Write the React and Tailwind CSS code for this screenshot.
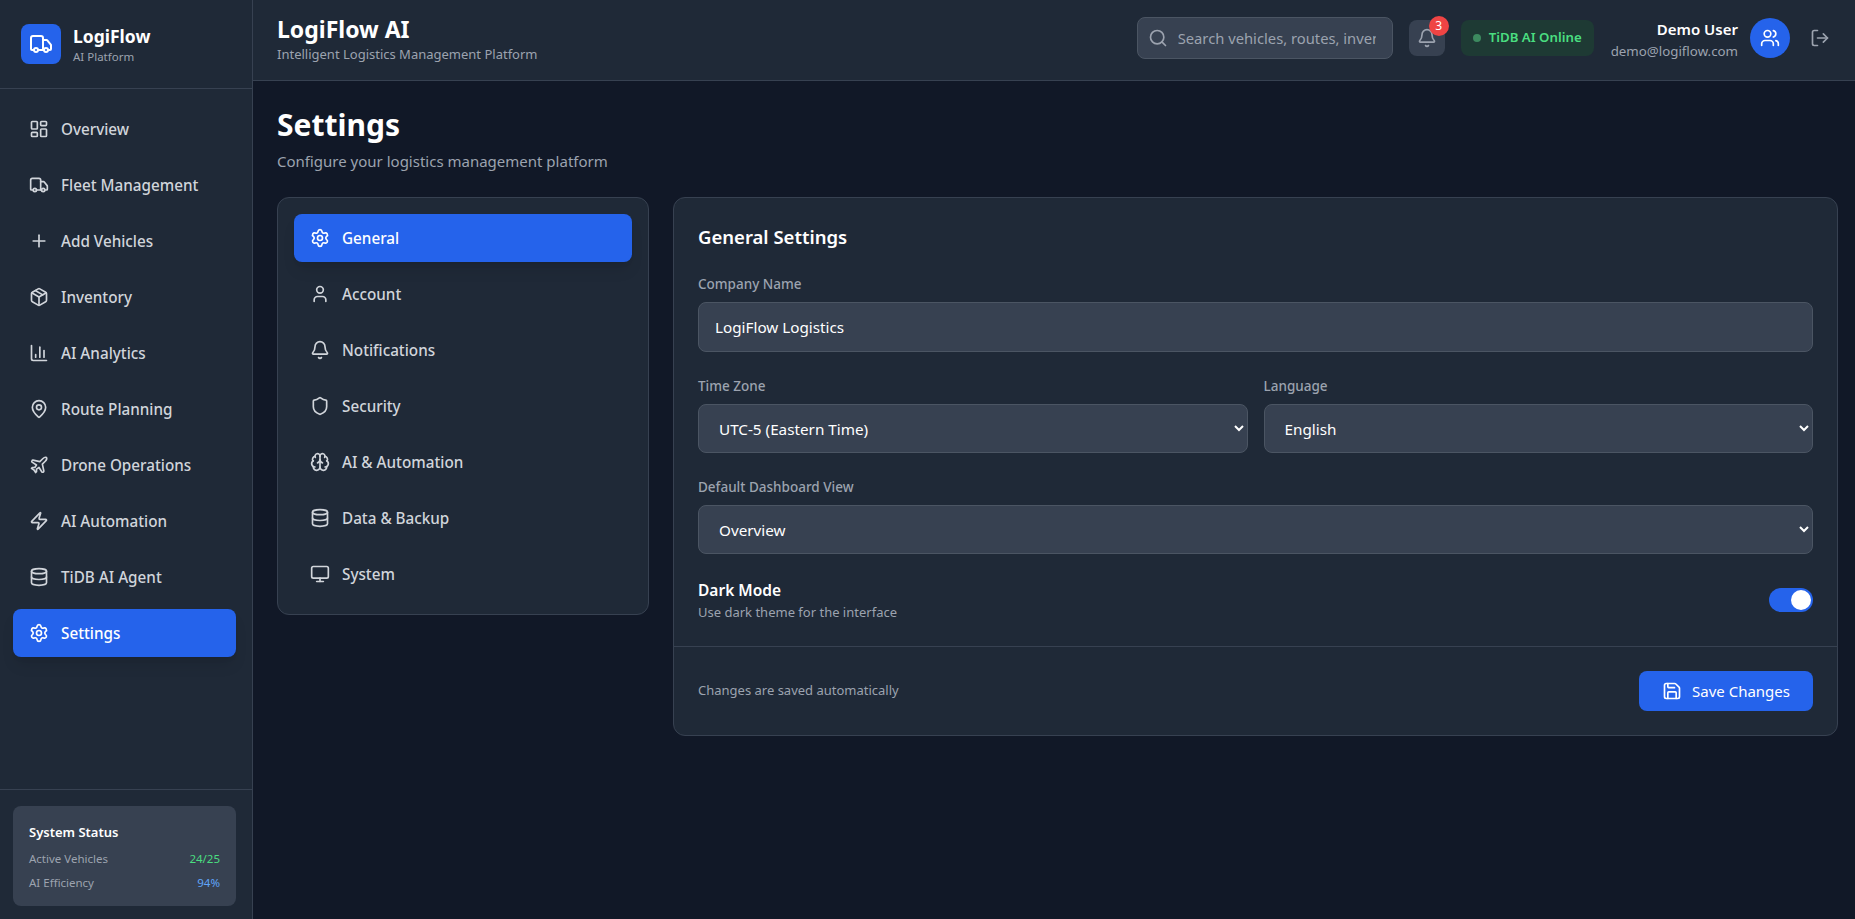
import { LayoutDashboard, Truck, Plus, Package, ChartColumn, MapPin, Plane, Zap, Database, Settings, User, Bell, Shield, Brain, Monitor, Users, LogOut, Search, Save } from 'lucide-react';

const navItems = [
  { label: 'Overview', icon: LayoutDashboard },
  { label: 'Fleet Management', icon: Truck },
  { label: 'Add Vehicles', icon: Plus },
  { label: 'Inventory', icon: Package },
  { label: 'AI Analytics', icon: ChartColumn },
  { label: 'Route Planning', icon: MapPin },
  { label: 'Drone Operations', icon: Plane },
  { label: 'AI Automation', icon: Zap },
  { label: 'TiDB AI Agent', icon: Database },
  { label: 'Settings', icon: Settings, active: true },
];

const settingsTabs = [
  { label: 'General', icon: Settings, active: true },
  { label: 'Account', icon: User },
  { label: 'Notifications', icon: Bell },
  { label: 'Security', icon: Shield },
  { label: 'AI & Automation', icon: Brain },
  { label: 'Data & Backup', icon: Database },
  { label: 'System', icon: Monitor },
];

const NavButton = ({ item }) => {
  const Icon = item.icon;
  return (
    <button
      className={`flex items-center gap-3 h-12 w-full px-4 rounded-lg text-[15.25px] font-medium text-left ${
        item.active ? 'bg-[#2563eb] text-white shadow-lg' : 'text-[#d1d5db]'
      }`}
    >
      <Icon className="w-5 h-5 shrink-0" />
      {item.label}
    </button>
  );
};

const SelectField = ({ label, options, className = '' }) => (
  <div className={className}>
    <label className="block text-[13.5px] font-medium text-[#9ca3af] mb-2 leading-[20px]">{label}</label>
    <select className="w-full h-[49px] px-4 bg-[#374151] border border-[#4b5563] rounded-lg text-[15.25px] text-white">
      {options.map((o) => (
        <option key={o}>{o}</option>
      ))}
    </select>
  </div>
);

const App = () => {
  return (
    <div className="flex h-screen bg-[#111827] overflow-hidden font-['Noto_Sans',sans-serif]">
      {/* Sidebar */}
      <aside className="w-[253px] shrink-0 flex flex-col bg-[#1f2937] border-r border-[#374151]">
        <div className="h-[89px] px-[21px] flex items-center gap-3 border-b border-[#374151]">
          <div className="w-10 h-10 bg-[#2563eb] rounded-lg flex items-center justify-center">
            <Truck className="w-6 h-6 text-white" />
          </div>
          <div>
            <h1 className="text-[17.5px] font-bold text-white leading-[24px]">LogiFlow</h1>
            <p className="text-[11.5px] text-[#9ca3af] leading-[16px] mt-px">AI Platform</p>
          </div>
        </div>

        <nav className="flex-1 pt-4 pl-[13px] pr-4 flex flex-col gap-2">
          {navItems.map((item) => (
            <NavButton key={item.label} item={item} />
          ))}
        </nav>

        <div className="border-t border-[#374151] pt-4 pl-[13px] pr-4 pb-[13px]">
          <div className="bg-[#374151] rounded-lg p-4 h-[100px]">
            <h3 className="text-[13px] font-semibold text-white leading-[20px] mb-[5px]">System Status</h3>
            <div className="flex justify-between text-[11.5px] leading-[24px]">
              <span className="text-[#9ca3af]">Active Vehicles</span>
              <span className="text-[#4ade80]">24/25</span>
            </div>
            <div className="flex justify-between text-[11.5px] leading-[24px]">
              <span className="text-[#9ca3af]">AI Efficiency</span>
              <span className="text-[#60a5fa]">94%</span>
            </div>
          </div>
        </div>
      </aside>

      <div className="flex-1 min-w-0 flex flex-col">
        {/* Header */}
        <header className="h-[81px] shrink-0 bg-[#1f2937] border-b border-[#374151] pl-6 pr-[25px] flex items-center justify-between">
          <div className="pb-[2px]">
            <h2 className="text-[23px] font-bold text-white leading-[30px]">LogiFlow AI</h2>
            <p className="text-[13px] text-[#9ca3af] leading-[20px]">Intelligent Logistics Management Platform</p>
          </div>
          <div className="flex items-center -mt-1">
            <div className="relative w-[256px]">
              <Search className="absolute left-[11px] top-[11px] w-5 h-5 text-[#9ca3af]" />
              <input
                placeholder="Search vehicles, routes, inventory..."
                className="w-full h-[42px] pl-10 pr-4 bg-[#374151] border border-[#4b5563] rounded-lg text-[14.75px] text-white placeholder:text-[#9ca3af]"
              />
            </div>
            <button className="relative ml-4 w-9 h-9 bg-[#374151] rounded-lg flex items-center justify-center text-[#9ca3af]">
              <Bell className="w-5 h-5" />
              <span className="absolute -top-1 -right-1 w-5 h-5 bg-[#ef4444] rounded-full text-white text-xs flex items-center justify-center">3</span>
            </button>
            <div className="ml-4 h-9 w-[133px] rounded-lg bg-[#1e3a34] flex items-center justify-center gap-2">
              <span className="w-2 h-2 rounded-full bg-[#3d8a5f]" />
              <span className="text-[13.25px] font-semibold text-[#4ade80]">TiDB AI Online</span>
            </div>
            <div className="ml-[17px] mt-1 text-right">
              <p className="text-[15px] font-semibold text-white leading-[20px]">Demo User</p>
              <p className="text-[13.3px] text-[#9ca3af] leading-[20px] mt-0.5">demo@logiflow.com</p>
            </div>
            <div className="ml-3 w-10 h-10 bg-[#2563eb] rounded-full flex items-center justify-center">
              <Users className="w-5 h-5 text-white" />
            </div>
            <button className="ml-5 text-[#9ca3af]">
              <LogOut className="w-5 h-5" />
            </button>
          </div>
        </header>

        {/* Main */}
        <main className="flex-1 pl-6 pr-[17px] pt-[26px]">
          <h1 className="text-3xl font-bold text-white leading-[36px]">Settings</h1>
          <p className="text-[15px] text-[#9ca3af] leading-[20px] mt-2">Configure your logistics management platform</p>

          <div className="flex items-start gap-6 mt-[26px]">
            <div className="w-[372px] shrink-0 bg-[#1f2937] border border-[#374151] rounded-xl p-4 flex flex-col gap-2">
              {settingsTabs.map((tab) => (
                <NavButton key={tab.label} item={tab} />
              ))}
            </div>

            <div className="flex-1 bg-[#1f2937] border border-[#374151] rounded-xl">
              <div className="px-6 pt-6">
                <h2 className="text-[18.5px] font-semibold text-white leading-[30px] mb-[22px]">General Settings</h2>
                <label className="block text-[13.5px] font-medium text-[#9ca3af] mb-2 leading-[20px]">Company Name</label>
                <input
                  defaultValue="LogiFlow Logistics"
                  className="w-full h-[50px] px-4 bg-[#374151] border border-[#4b5563] rounded-lg text-[15.25px] text-white"
                />
                <div className="flex gap-4 mt-6">
                  <SelectField className="flex-1" label="Time Zone" options={['UTC-5 (Eastern Time)']} />
                  <SelectField className="flex-1" label="Language" options={['English']} />
                </div>
                <SelectField className="mt-6" label="Default Dashboard View" options={['Overview']} />
                <div className="flex items-center justify-between mt-6 pb-6">
                  <div>
                    <p className="text-[15.5px] font-semibold text-white leading-[24px]">Dark Mode</p>
                    <p className="text-[13px] text-[#9ca3af] leading-[20px]">Use dark theme for the interface</p>
                  </div>
                  <div className="w-11 h-6 bg-[#2563eb] rounded-full flex items-center justify-end px-0.5">
                    <span className="w-5 h-5 bg-white rounded-full" />
                  </div>
                </div>
              </div>
              <div className="border-t border-[#374151] p-6 flex items-center justify-between">
                <p className="text-[13px] text-[#9ca3af]">Changes are saved automatically</p>
                <button className="h-10 w-[174px] bg-[#2563eb] rounded-lg text-[15px] text-white flex items-center justify-center gap-2.5">
                  <Save className="w-5 h-5" />
                  Save Changes
                </button>
              </div>
            </div>
          </div>
        </main>
      </div>
    </div>
  );
};

export default App;
